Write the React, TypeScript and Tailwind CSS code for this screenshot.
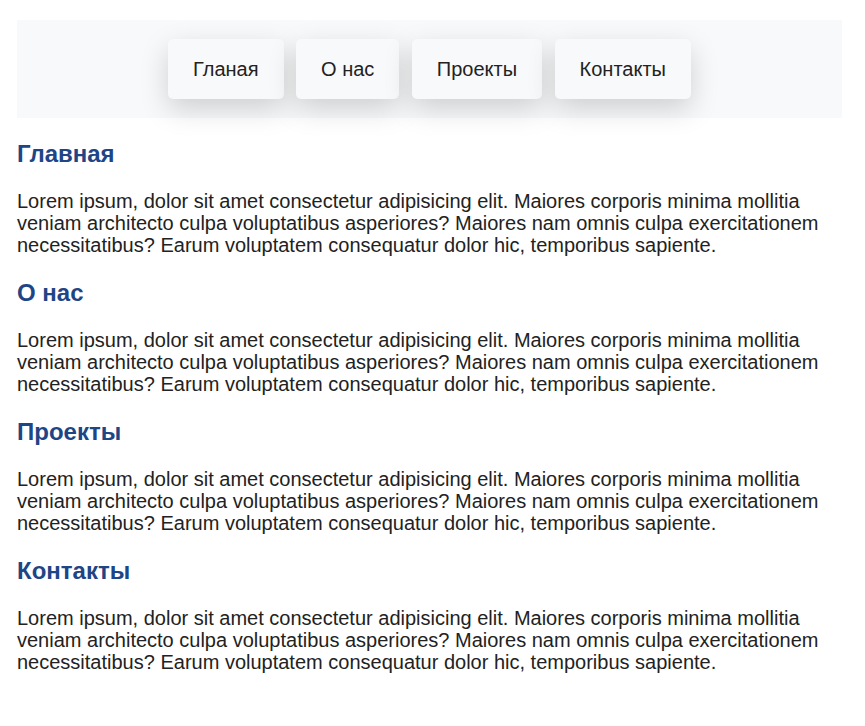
import React from "react";

const links = ["Гланая", "О нас", "Проекты", "Контакты"];

const sections = ["Главная", "О нас", "Проекты", "Контакты"];

const lorem =
  "Lorem ipsum, dolor sit amet consectetur adipisicing elit. Maiores corporis minima mollitia veniam architecto culpa voluptatibus asperiores? Maiores nam omnis culpa exercitationem necessitatibus? Earum voluptatem consequatur dolor hic, temporibus sapiente.";

export default function App() {
  return (
    <div className="min-h-[726px] bg-white pl-[17px] pr-[23px] pt-[20px] font-['Liberation_Sans',Arial,sans-serif] text-[#222]">
      {/* Nav */}
      <nav className="flex h-[98px] items-center justify-center gap-[12.5px] bg-[#f8f9fa]">
        {links.map((link) => (
          <a
            key={link}
            href="#"
            className="flex h-[60px] items-center rounded-[5px] bg-[#f8f9fa] px-[25px] text-[20px] text-[#222] shadow-[0_10px_28px_rgba(0,0,0,0.17)]"
          >
            {link}
          </a>
        ))}
      </nav>

      {/* Sections */}
      <main className="pt-[21.5px]">
        {sections.map((title) => (
          <section key={title} className="mb-[22.5px]">
            <h2 className="text-[24px] font-bold leading-[27px] text-[#1e4585]">
              {title}
            </h2>
            <p className="mt-[23.5px] text-[20px] leading-[22px]">{lorem}</p>
          </section>
        ))}
      </main>
    </div>
  );
}
